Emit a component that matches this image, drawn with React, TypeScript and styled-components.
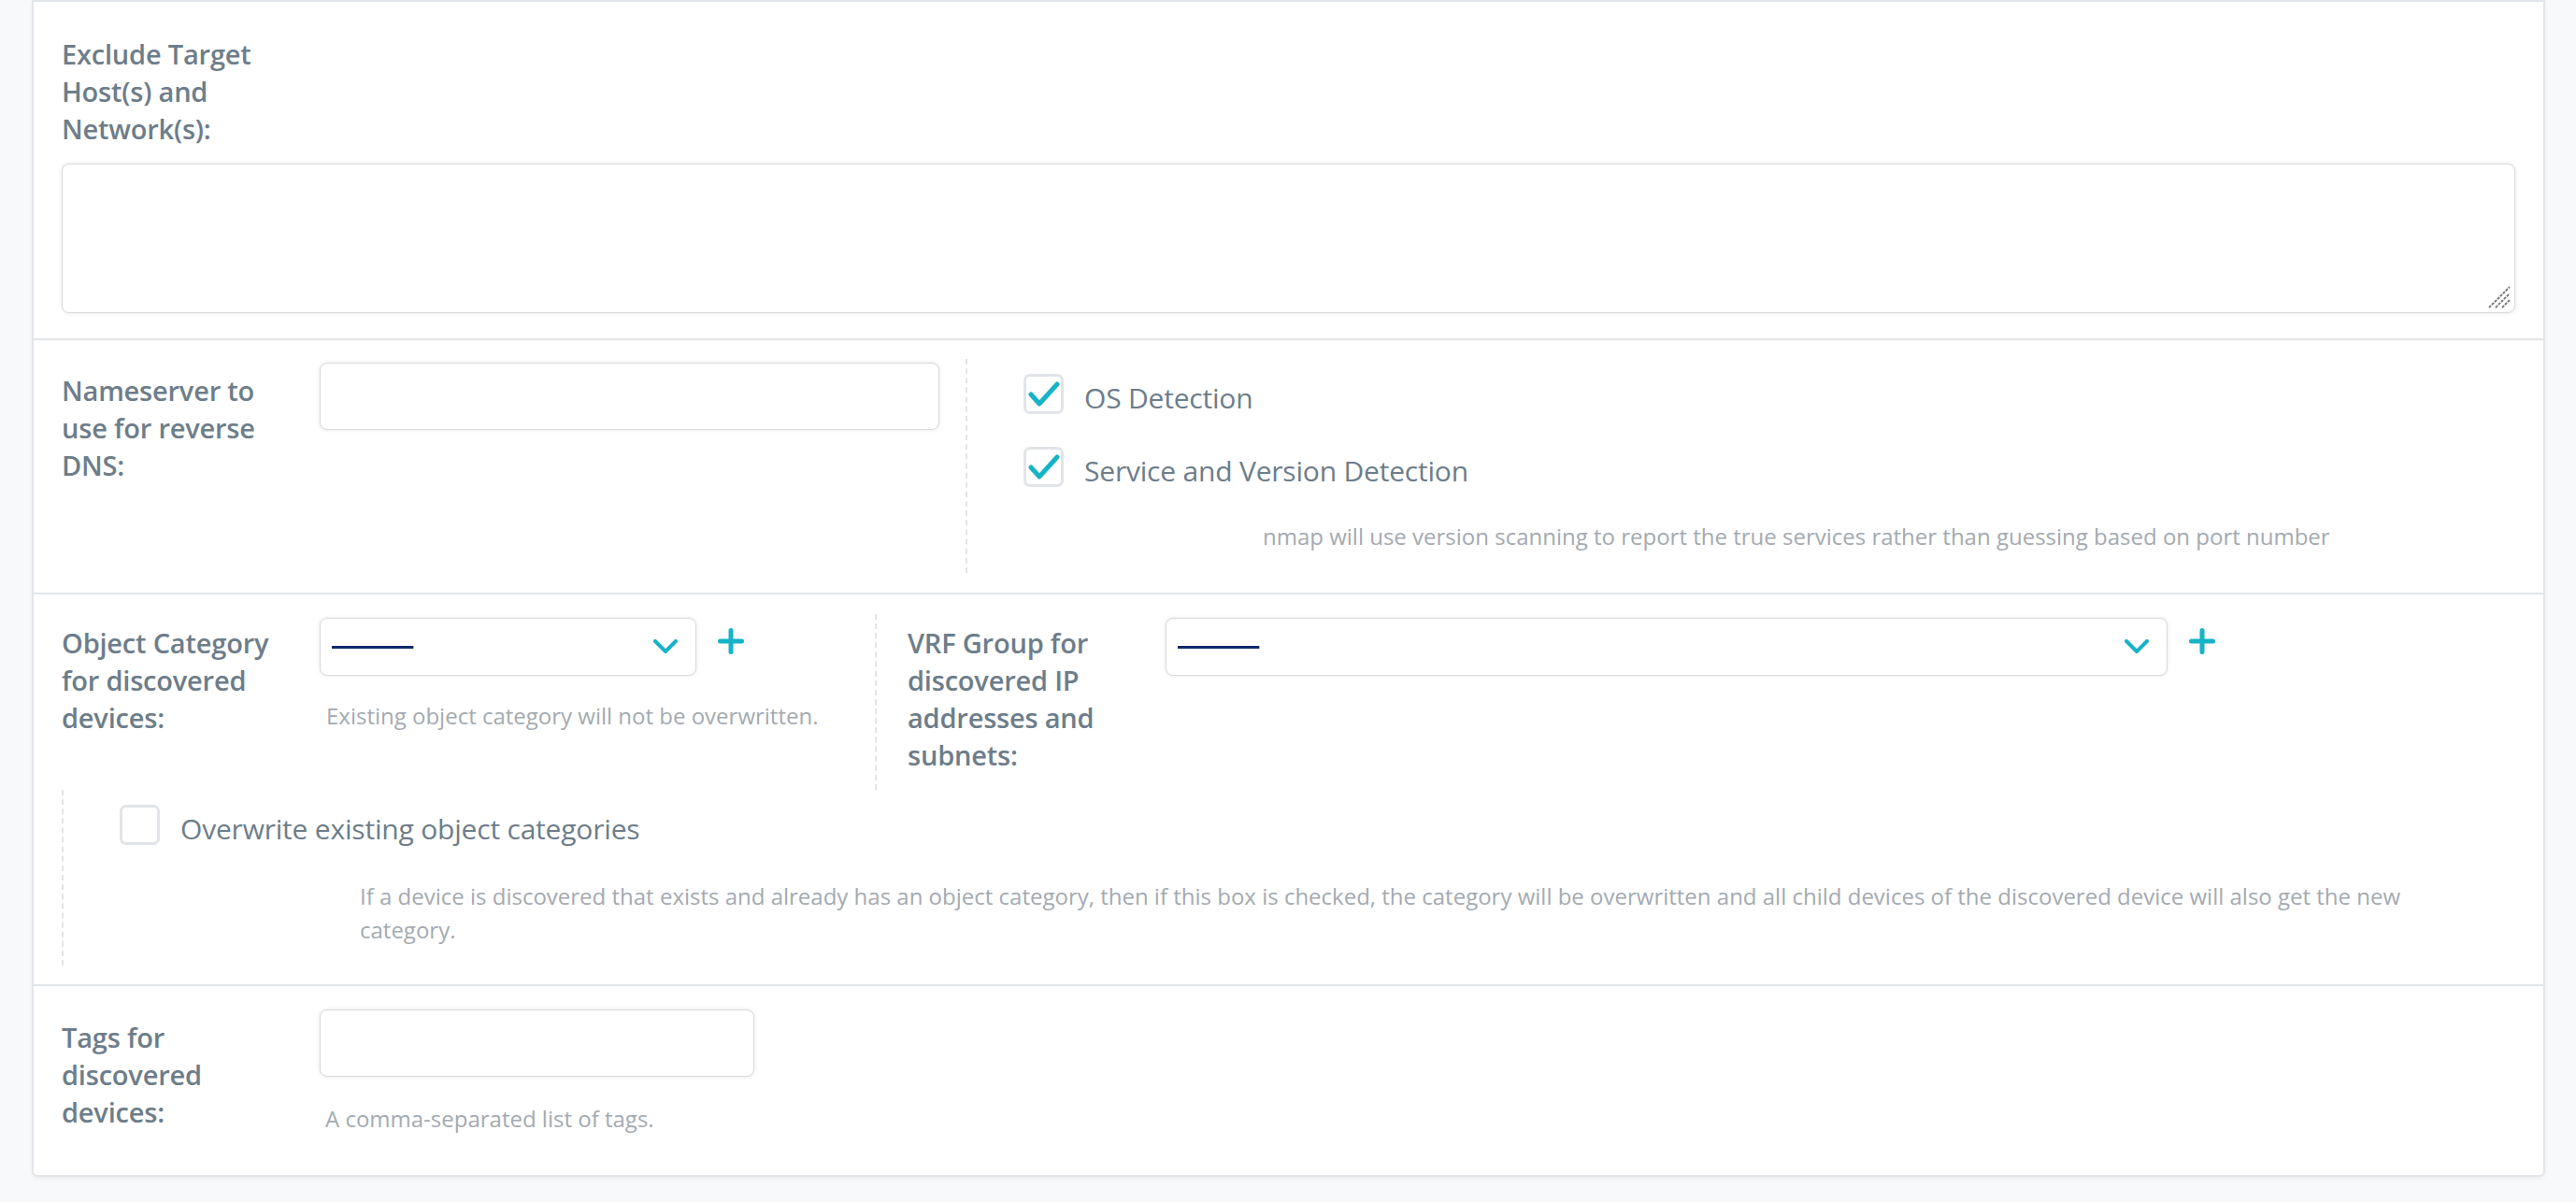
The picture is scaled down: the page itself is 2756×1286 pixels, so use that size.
import React from "react";
import styled, { createGlobalStyle } from "styled-components";

const Global = createGlobalStyle`
  html, body { margin: 0; padding: 0; background: #f8f9fa; }
  body { font-family: "Open Sans", "Liberation Sans", sans-serif; }
  * { box-sizing: border-box; }
`;

const Page = styled.div`
  padding: 0 33px 30px 34px;
`;

const Card = styled.div`
  background: #fff;
  border: 2px solid #e3e6ea;
  border-radius: 0 0 6px 6px;
  box-shadow: 0 2px 4px rgba(0, 0, 0, 0.05);
`;

const Section = styled.section<{ $pt: number; $pb: number }>`
  padding: ${(p) => p.$pt}px 30px ${(p) => p.$pb}px 30px;
  & + & {
    border-top: 2px solid #e3e6ea;
  }
`;

const Label = styled.label`
  display: block;
  width: 250px;
  font-size: 29px;
  line-height: 40px;
  font-weight: 600;
  color: #6d7d8a;
  letter-spacing: -0.2px;
`;

const LabelCol = styled.div<{ $pt?: number }>`
  width: 276px;
  flex: none;
  padding-top: ${(p) => p.$pt ?? 10}px;
`;

const TextAreaWrap = styled.div`
  position: relative;
  margin-top: 17px;
`;

const TextArea = styled.textarea`
  display: block;
  width: 100%;
  height: 160px;
  border: 1px solid #dadada;
  border-radius: 8px;
  box-shadow: 0 0 4px rgba(0, 0, 0, 0.1);
  outline: none;
  resize: none;
  font: inherit;
`;

const ResizeGrip = styled.svg`
  position: absolute;
  right: 5px;
  bottom: 5px;
  pointer-events: none;
`;

const SplitRow = styled.div`
  display: flex;
  align-items: stretch;
`;

const LeftPart = styled.div<{ $width: number }>`
  width: ${(p) => p.$width}px;
  flex: none;
  padding-top: 4px;
`;

const RightPart = styled.div<{ $pl: number; $pb: number }>`
  flex: 1;
  border-left: 2px dashed #e1e4e8;
  padding: 4px 0 ${(p) => p.$pb}px ${(p) => p.$pl}px;
`;

const Field = styled.div`
  display: flex;
  align-items: flex-start;
`;

const Control = styled.div<{ $width: number }>`
  width: ${(p) => p.$width}px;
  flex: none;
`;

const TextInput = styled.input`
  display: block;
  width: 100%;
  height: 72px;
  border: 1px solid #dadada;
  border-radius: 8px;
  box-shadow: 0 0 4px rgba(0, 0, 0, 0.1);
  outline: none;
  font: inherit;
`;

const SelectBox = styled.div`
  display: flex;
  align-items: center;
  justify-content: space-between;
  height: 62px;
  padding: 0 19px 0 12px;
  border: 1px solid #dadada;
  border-radius: 8px;
  box-shadow: 0 0 4px rgba(0, 0, 0, 0.1);
  background: #fff;
`;

const Placeholder = styled.span`
  font-family: "DejaVu Sans", sans-serif;
  font-size: 28px;
  line-height: 1;
  color: #13296b;
  letter-spacing: -0.4px;
  text-decoration: line-through;
  text-decoration-thickness: 3px;
  text-decoration-color: #13296b;
`;

const AddButton = styled.button`
  flex: none;
  margin: 11px 0 0 23px;
  padding: 0;
  width: 28px;
  height: 28px;
  border: none;
  background: none;
  display: flex;
`;

const Help = styled.p<{ $mt: number; $pl: number; $pr?: number; $nowrap?: boolean }>`
  margin: ${(p) => p.$mt}px 0 0 0;
  padding: 0 ${(p) => p.$pr ?? 0}px 0 ${(p) => p.$pl}px;
  font-size: 24px;
  line-height: 36px;
  color: #a4aab1;
  white-space: ${(p) => (p.$nowrap ? "nowrap" : "normal")};
`;

const CheckGroup = styled.div<{ $pb: number }>`
  border-left: 2px dashed #e1e4e8;
  padding: 16px 0 ${(p) => p.$pb}px 60px;
`;

const CheckRow = styled.label<{ $mt?: number }>`
  display: flex;
  align-items: flex-start;
  gap: 22px;
  margin-top: ${(p) => p.$mt ?? 0}px;
`;

const Box = styled.span`
  width: 43px;
  height: 43px;
  flex: none;
  border: 3px solid #e1e4e8;
  border-radius: 7px;
  background: #fff;
  display: flex;
  align-items: center;
  justify-content: center;
`;

const CheckText = styled.span`
  font-size: 30px;
  line-height: 40px;
  padding-top: 6px;
  font-weight: 500;
  color: #6d7d8a;
  letter-spacing: -0.2px;
`;

const Chevron = () => (
  <svg width="26" height="16" viewBox="0 0 26 16" fill="none">
    <polyline points="2,2 13,13 24,2" stroke="#17b3c6" strokeWidth="4" strokeLinecap="round" strokeLinejoin="round" />
  </svg>
);

const Plus = () => (
  <svg width="28" height="28" viewBox="0 0 28 28" fill="none">
    <path d="M14 2.5V25.5M2.5 14H25.5" stroke="#17b3c6" strokeWidth="5" strokeLinecap="round" />
  </svg>
);

const CheckMark = () => (
  <svg width="34" height="28" viewBox="0 0 34 28" fill="none">
    <polyline points="3,14 12,24 31,3" stroke="#17b3c6" strokeWidth="5" strokeLinecap="round" strokeLinejoin="round" />
  </svg>
);

const Checkbox: React.FC<{ checked?: boolean; label: string; mt?: number }> = ({ checked, label, mt }) => (
  <CheckRow $mt={mt}>
    <Box>{checked ? <CheckMark /> : null}</Box>
    <CheckText>{label}</CheckText>
  </CheckRow>
);

const Select: React.FC = () => (
  <SelectBox>
    <Placeholder>---------</Placeholder>
    <Chevron />
  </SelectBox>
);

export default function App() {
  return (
    <>
      <Global />
      <Page>
        <Card>
          <Section $pt={36} $pb={27}>
            <Label>Exclude Target Host(s) and Network(s):</Label>
            <TextAreaWrap>
              <TextArea />
              <ResizeGrip width="24" height="24" viewBox="0 0 24 24">
                <path d="M1 23L23 1M8 23L23 8M15 23L23 15" stroke="#7a7a7a" strokeWidth="2" strokeDasharray="3 1.2" />
              </ResizeGrip>
            </TextAreaWrap>
          </Section>

          <Section $pt={20} $pb={21}>
            <SplitRow>
              <LeftPart $width={967}>
                <Field>
                  <LabelCol>
                    <Label>Nameserver to use for reverse DNS:</Label>
                  </LabelCol>
                  <Control $width={663}>
                    <TextInput />
                  </Control>
                </Field>
              </LeftPart>
              <CheckGroup $pb={21}>
                <Checkbox checked label="OS Detection" />
                <Checkbox checked label="Service and Version Detection" mt={32} />
                <Help $mt={32} $pl={256}>
                  nmap will use version scanning to report the true services rather than guessing based on port number
                </Help>
              </CheckGroup>
            </SplitRow>
          </Section>

          <Section $pt={21} $pb={20}>
            <SplitRow>
              <LeftPart $width={870}>
                <Field>
                  <LabelCol $pt={7}>
                    <Label>Object Category for discovered devices:</Label>
                  </LabelCol>
                  <Control $width={403}>
                    <Select />
                    <Help $mt={25} $pl={7} $nowrap>
                      Existing object category will not be overwritten.
                    </Help>
                  </Control>
                  <AddButton aria-label="Add object category">
                    <Plus />
                  </AddButton>
                </Field>
              </LeftPart>
              <RightPart $pl={33} $pb={17}>
                <Field>
                  <LabelCol $pt={7}>
                    <Label>VRF Group for discovered IP addresses and subnets:</Label>
                  </LabelCol>
                  <Control $width={1072}>
                    <Select />
                  </Control>
                  <AddButton aria-label="Add VRF group">
                    <Plus />
                  </AddButton>
                </Field>
              </RightPart>
            </SplitRow>
            <CheckGroup $pb={20}>
              <Checkbox label="Overwrite existing object categories" />
              <Help $mt={34} $pl={257} $pr={40}>
                If a device is discovered that exists and already has an object category, then if this box is checked, the category will be overwritten and all child devices of the discovered device will also get the new category.
              </Help>
            </CheckGroup>
          </Section>

          <Section $pt={25} $pb={42}>
            <Field>
              <LabelCol>
                <Label>Tags for discovered devices:</Label>
              </LabelCol>
              <Control $width={465}>
                <TextInput />
                <Help $mt={27} $pl={6}>A comma-separated list of tags.</Help>
              </Control>
            </Field>
          </Section>
        </Card>
      </Page>
    </>
  );
}
